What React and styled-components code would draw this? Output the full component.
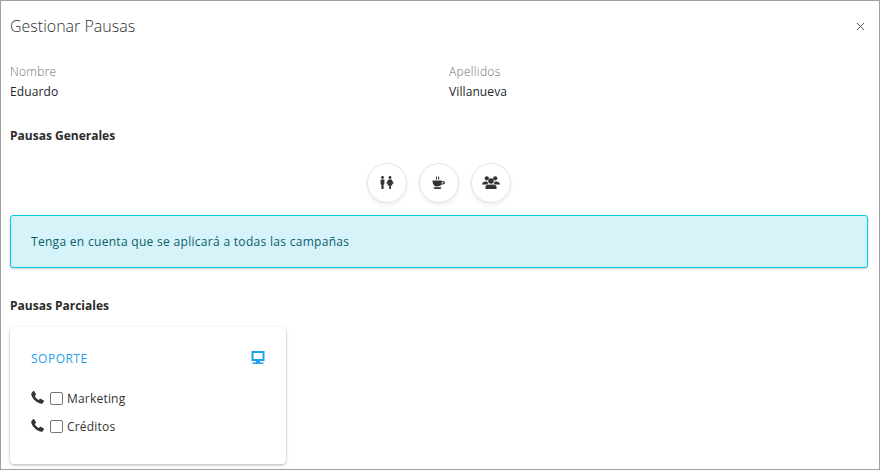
import React from "react";
import styled, { createGlobalStyle } from "styled-components";

const GlobalStyle = createGlobalStyle`
  html, body {
    margin: 0;
    padding: 0;
    background: #fff;
  }
  body {
    font-family: "Open Sans", "Noto Sans", sans-serif;
    color: #212529;
  }
`;

const Modal = styled.div`
  width: 880px;
  height: 470px;
  box-sizing: border-box;
  border: 1px solid #a0a0a0;
  background: #fff;
  overflow: hidden;
  display: flex;
  flex-direction: column;
`;

const Header = styled.div`
  height: 51px;
  box-sizing: border-box;
  padding: 0 11px 0 9px;
  display: flex;
  align-items: center;
  justify-content: space-between;
`;

const Title = styled.h5`
  margin: 0;
  font-size: 16px;
  font-weight: 300;
  color: #303030;
  line-height: 51px;
`;

const Close = styled.button`
  width: 14px;
  height: 14px;
  padding: 0;
  border: 0;
  background: none;
  color: #555;
  display: flex;
`;

const Body = styled.div`
  padding: 10px 11px 0 9px;
  flex: 1;
  display: flex;
  flex-direction: column;
`;

const Fields = styled.div`
  display: grid;
  grid-template-columns: 439px 1fr;
`;

const Label = styled.div`
  font-size: 12px;
  font-weight: 300;
  letter-spacing: 0.3px;
  line-height: 20px;
  color: #707070;
`;

const Value = styled.div`
  font-size: 12px;
  letter-spacing: 0.1px;
  line-height: 20px;
  color: #212529;
`;

const SectionTitle = styled.div`
  font-size: 12px;
  font-weight: 700;
  line-height: 20px;
  color: #2b2b2b;
  margin-top: ${(p) => p.$top}px;
`;

const RoundRow = styled.div`
  display: flex;
  justify-content: center;
  gap: 12px;
  margin-top: 17px;
`;

const RoundButton = styled.button`
  width: 40px;
  height: 40px;
  box-sizing: border-box;
  border-radius: 50%;
  border: 1px solid #e2e4e8;
  background: #fff;
  padding: 0;
  display: flex;
  align-items: center;
  justify-content: center;
  color: #333;
  box-shadow: 0 2px 4px rgba(0, 0, 0, 0.07);
`;

const Alert = styled.div`
  margin-top: 12px;
  height: 53px;
  box-sizing: border-box;
  display: flex;
  align-items: center;
  padding: 0 20px 1px;
  background: #d5f3f8;
  border: 1px solid #00cfe8;
  border-radius: 3px;
  box-shadow: 0 1px 2px rgba(0, 0, 0, 0.2);
  color: #0b5f6b;
  font-size: 12px;
  letter-spacing: 0.3px;
`;

const Card = styled.div`
  margin-top: 11px;
  width: 276px;
  height: 137px;
  box-sizing: border-box;
  padding: 21px 21px 0 21px;
  background: #fff;
  border-radius: 4px;
  box-shadow: 0 1px 3px rgba(0, 0, 0, 0.3);
`;

const CardHead = styled.div`
  display: flex;
  align-items: center;
  justify-content: space-between;
  height: 20px;
  margin-bottom: 16px;
  color: #1e9ff2;
`;

const CardTitle = styled.span`
  font-size: 12px;
  letter-spacing: 0.5px;
  color: #1e9ff2;
`;

const CheckRow = styled.label`
  display: flex;
  align-items: center;
  height: 28px;
  font-size: 12px;
  letter-spacing: 0.2px;
  color: #333;
`;

const PhoneWrap = styled.span`
  width: 13px;
  height: 13px;
  margin-right: 6px;
  margin-top: -2px;
  color: #333;
  display: flex;
`;

const Box = styled.span`
  width: 13px;
  height: 13px;
  box-sizing: border-box;
  border: 1px solid #767676;
  border-radius: 2px;
  margin-right: 4px;
  background: #fff;
`;

const CloseIcon = () => (
  <svg width="14" height="14" viewBox="0 0 14 14" stroke="currentColor" strokeWidth="1" fill="none">
    <path d="M3 3l7 7M10 3l-7 7" />
  </svg>
);

const RestroomIcon = () => (
  <svg width="14" height="14" viewBox="0 0 14 14" fill="currentColor">
    <circle cx="2.500" cy="1.500" r="1.400" />
    <path d="M.6 3.400h3.800v5.200h-.8V13H1.400V8.600H.6z" />
    <circle cx="10" cy="1.500" r="1.400" />
    <path d="M8.400 3.400h3.200l2.200 4-1.200.6-1-1.600.9 3.200h-1.500V13H9.200V9.600H7.400l1-3.200-1 1.600-1.200-.6z" />
  </svg>
);

const CoffeeIcon = () => (
  <svg width="14" height="14" viewBox="0 0 14 14" fill="currentColor">
    <path d="M4 .5h1v3H4zM6.200.5h1v3h-1z" />
    <path d="M.5 4.500h9.200v.8h2c1.300 0 1.800 1 1.200 2-.5.8-1.500 1.200-3.500 1.300C8.600 10 7.500 10.500 5 10.500 2 10.500.5 8 .5 4.500zM9.600 6.300c0 .5-.1 1-.2 1.400 1.200-.1 2-.4 2.300-.9.200-.3.100-.5-.3-.5z" />
    <path d="M1.500 11.200h8L8.500 13H2.500z" />
  </svg>
);

const GroupIcon = () => (
  <svg width="18" height="14" viewBox="0 0 18 14" fill="currentColor">
    <circle cx="9" cy="5" r="2.800" />
    <circle cx="4.800" cy="2.300" r="2.100" />
    <circle cx="13.200" cy="2.300" r="2.100" />
    <path d="M0 8.500c0-2 1.800-3 3.800-3 .7 0 1.300.1 1.700.3.100 1 .4 1.900 1 2.700z" />
    <path d="M18 8.500c0-2-1.800-3-3.800-3-.7 0-1.300.1-1.700.3-.1 1-.4 1.900-1 2.700z" />
    <path d="M3.500 10.500c0-1.300 2.500-2 5.500-2s5.500.7 5.500 2V13h-11z" />
  </svg>
);

const MonitorIcon = () => (
  <svg width="14" height="14" viewBox="0 0 14 14" fill="currentColor">
    <path fillRule="evenodd" d="M.5 0h13v10h-13zM2.500 2v6h9V2z" />
    <path d="M5 10h4v1.500H5zM1.500 11.500h11V13h-11z" />
  </svg>
);

const PhoneIcon = () => (
  <svg width="13" height="13" viewBox="0 0 13 13" fill="currentColor">
    <path d="M3 0l1.900 3c.2.400.1.800-.1 1l-1 .9c.6 1.600 2.200 3.300 3.900 4l1-1c.2-.2.600-.3 1-.1l3 1.800c.4.200.4.700.2 1l-1.200 1.700c-.3.400-.8.600-1.300.5C5.300 11.700 1.100 7.800.2 3.200.1 2.700.2 2.200.6 1.900L2.200 0c.2-.2.600-.2.800 0z" />
  </svg>
);

const pausas = [<RestroomIcon key="r" />, <CoffeeIcon key="c" />, <GroupIcon key="g" />];
const campanas = ["Marketing", "Créditos"];

export default function App() {
  return (
    <>
      <GlobalStyle />
      <Modal>
        <Header>
          <Title>Gestionar Pausas</Title>
          <Close>
            <CloseIcon />
          </Close>
        </Header>
        <Body>
          <Fields>
            <div>
              <Label>Nombre</Label>
              <Value>Eduardo</Value>
            </div>
            <div>
              <Label>Apellidos</Label>
              <Value>Villanueva</Value>
            </div>
          </Fields>
          <SectionTitle $top={24}>Pausas Generales</SectionTitle>
          <RoundRow>
            {pausas.map((icon) => (
              <RoundButton key={icon.key}>{icon}</RoundButton>
            ))}
          </RoundRow>
          <Alert>Tenga en cuenta que se aplicará a todas las campañas</Alert>
          <SectionTitle $top={28}>Pausas Parciales</SectionTitle>
          <Card>
            <CardHead>
              <CardTitle>SOPORTE</CardTitle>
              <MonitorIcon />
            </CardHead>
            {campanas.map((c) => (
              <CheckRow key={c}>
                <PhoneWrap>
                  <PhoneIcon />
                </PhoneWrap>
                <Box />
                {c}
              </CheckRow>
            ))}
          </Card>
        </Body>
      </Modal>
    </>
  );
}
